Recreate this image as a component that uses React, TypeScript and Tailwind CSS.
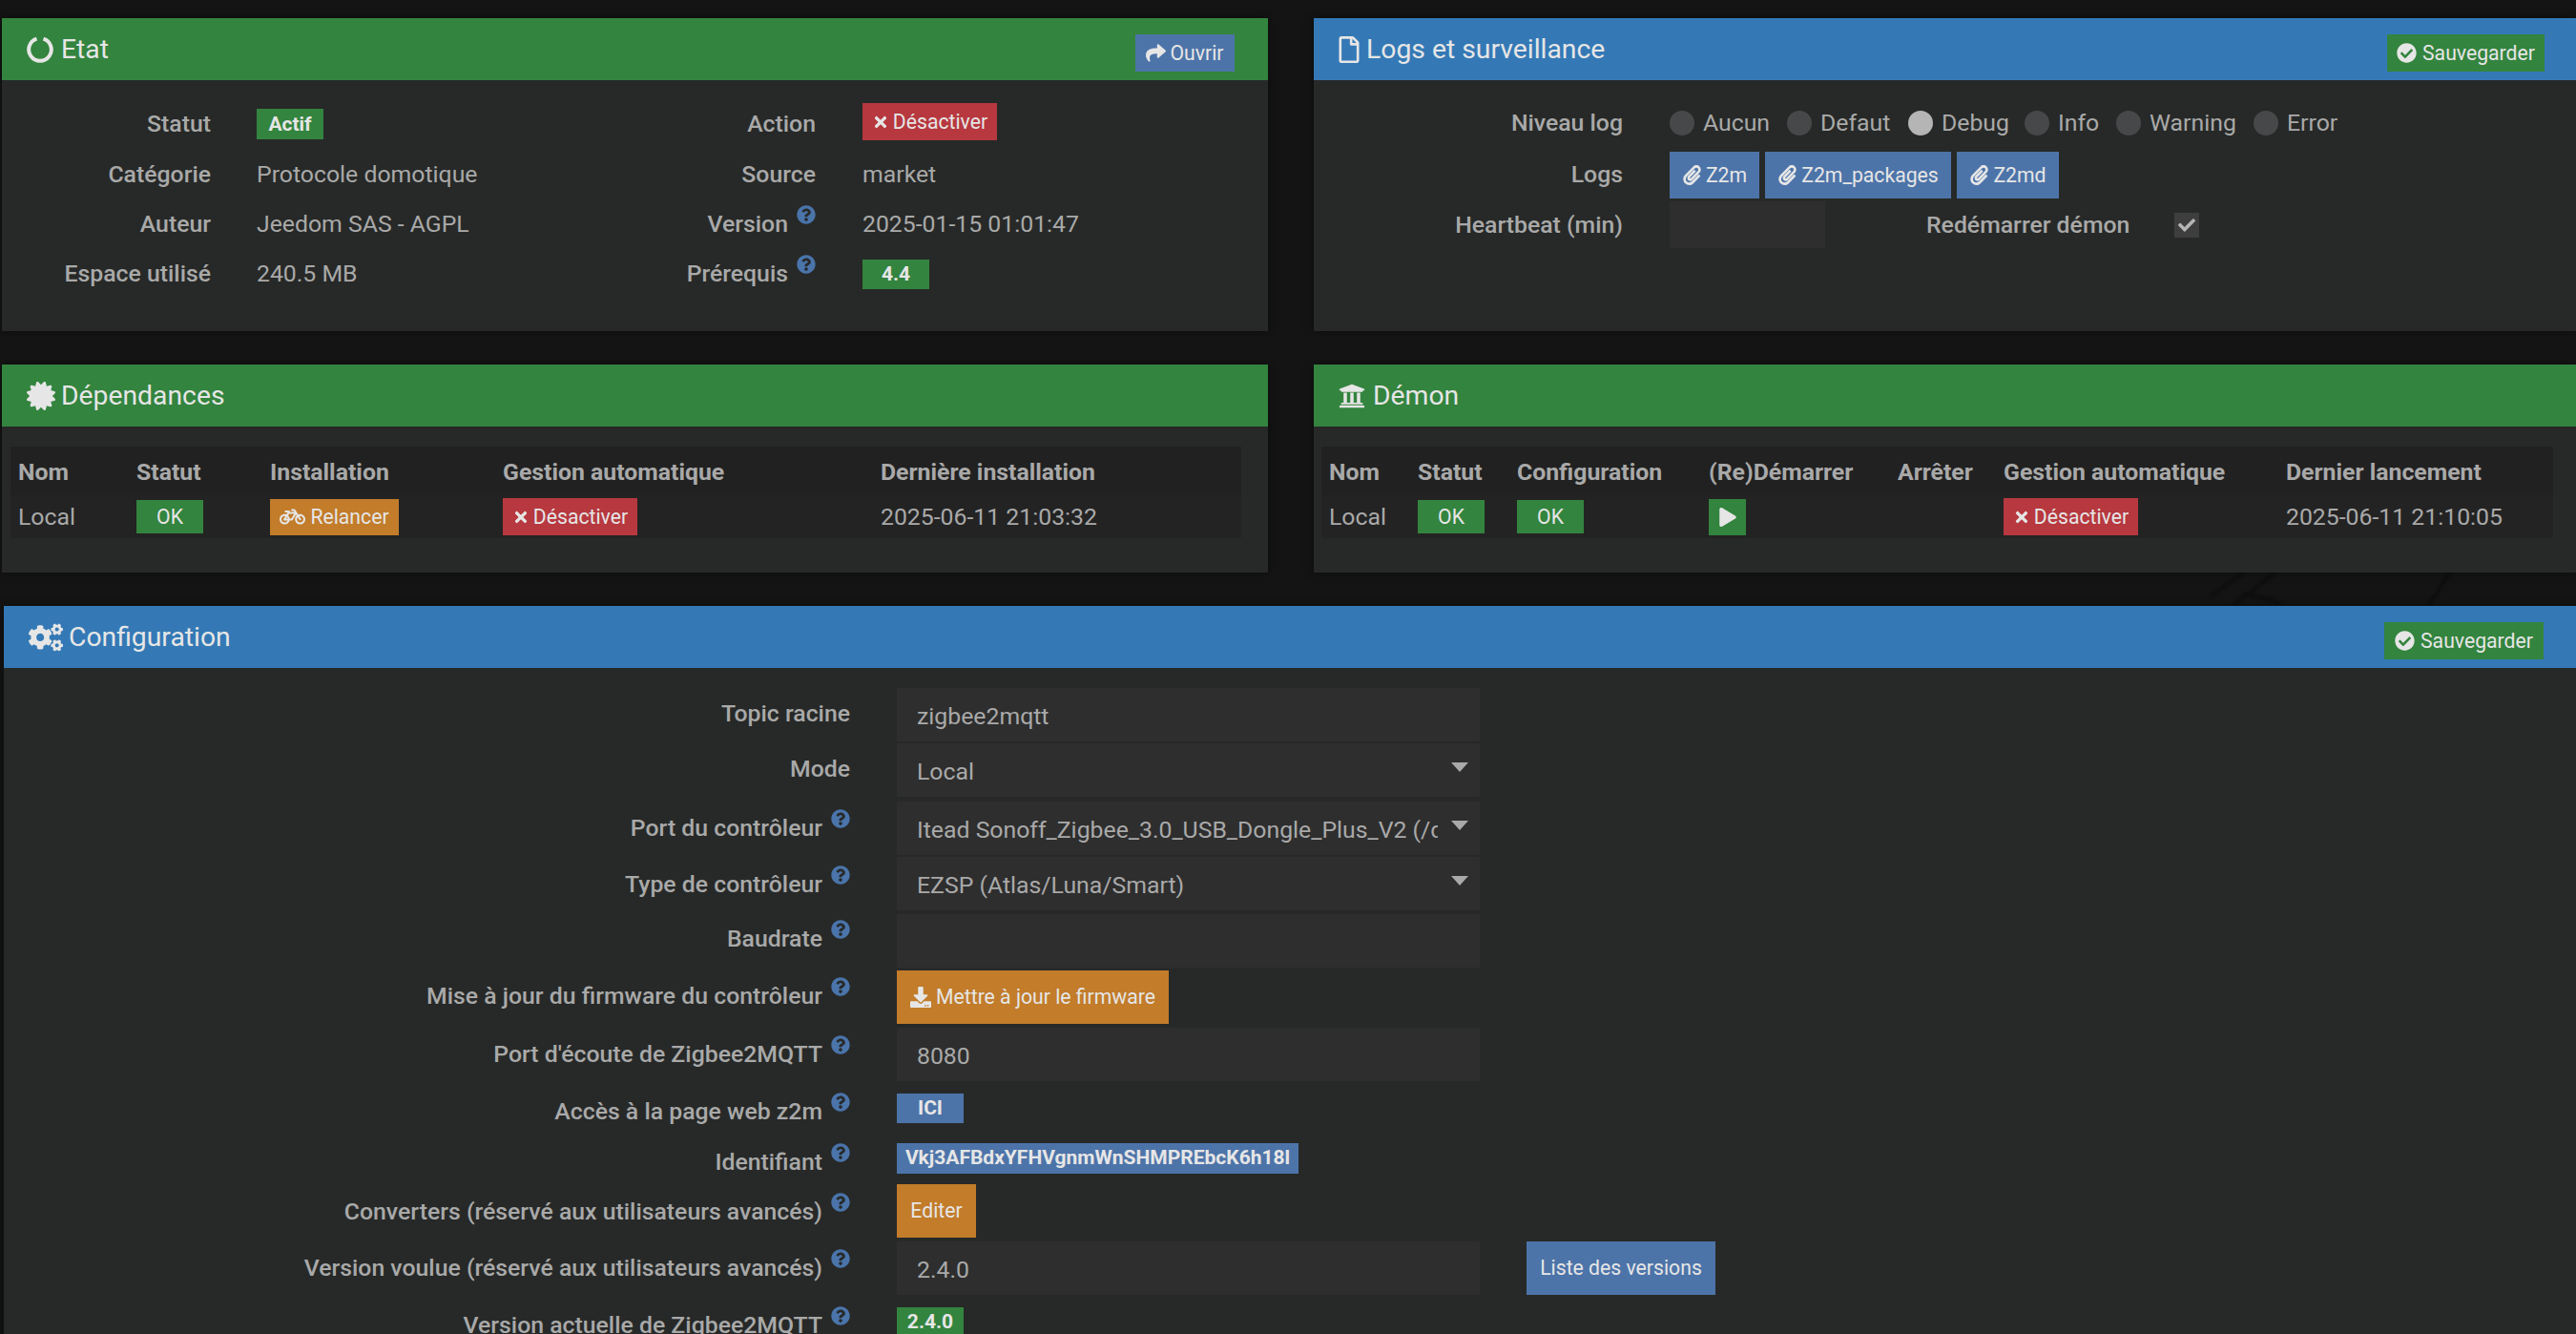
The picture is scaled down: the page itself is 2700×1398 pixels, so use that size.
import * as React from "react";
import {
  FaCertificate,
  FaCheck,
  FaCheckCircle,
  FaCogs,
  FaDownload,
  FaPaperclip,
  FaPlay,
  FaQuestionCircle,
  FaRegFile,
  FaShare,
  FaTimes,
  FaUniversity,
  FaBicycle,
} from "react-icons/fa";

// ============================================
// SMALL PIECES
// ============================================

function Help() {
  return (
    <span className="ml-[8px] mb-[20px] inline-flex w-[21px] shrink-0 justify-center text-[#4a74aa]">
      <FaQuestionCircle className="h-[20px] w-[20px]" />
    </span>
  );
}

function Notch() {
  return (
    <svg viewBox="0 0 28 28" className="mr-[8px] h-[28px] w-[28px]" fill="none" stroke="currentColor" strokeWidth="4">
      <path d="M10.5 2.7A11.8 11.8 0 1 0 17.5 2.7" />
    </svg>
  );
}

// faint streaks of the page's background picture, seen between the panels
function Streaks() {
  return (
    <svg viewBox="0 0 500 35" className="absolute left-[2200px] top-[600px] h-[35px] w-[500px] blur-[1.5px]" fill="none" stroke="#0e0e0e" strokeWidth="4">
      <path d="M118 24L152 0M140 35L185 0M150 21L190 32M345 35L368 0" />
    </svg>
  );
}

function Btn({ color, className, children }: { color: string; className: string; children: React.ReactNode }) {
  return (
    <span className={`inline-flex items-center whitespace-nowrap text-[21.2px] leading-none text-[#e6e6e6] ${color} ${className}`}>
      {children}
    </span>
  );
}

function Disable() {
  return (
    <Btn color="bg-[#b7383f]" className="h-[39px] w-[141px] justify-center gap-[4px]">
      <FaTimes className="h-[18px] w-[18px]" />
      Désactiver
    </Btn>
  );
}

function Save({ className }: { className: string }) {
  return (
    <Btn color="bg-[#33843e]" className={`h-[39px] justify-center gap-[6px] ${className}`}>
      <FaCheckCircle className="h-[21px] w-[21px]" />
      Sauvegarder
    </Btn>
  );
}

function Badge({ color, className, children }: { color: string; className: string; children: React.ReactNode }) {
  return (
    <span className={`inline-flex items-center justify-center whitespace-nowrap text-[21px] font-bold leading-none text-[#e6e6e6] ${color} ${className}`}>
      {children}
    </span>
  );
}

function Panel({
  title,
  icon,
  color,
  action,
  className,
  children,
}: {
  title: string;
  icon: React.ReactNode;
  color: string;
  action?: React.ReactNode;
  className: string;
  children: React.ReactNode;
}) {
  return (
    <section className={`relative bg-[#272928] shadow-[0_0_8px_rgba(0,0,0,0.5)] ${className}`}>
      <header className={`flex h-[65px] items-start justify-between ${color}`}>
        <h2 className="flex h-[65px] items-center pl-[26px] text-[28.3px] font-normal text-[#e6e6e6]">
          {icon}
          {title}
        </h2>
        {action}
      </header>
      {children}
    </section>
  );
}

// ============================================
// ETAT / LOGS
// ============================================

function EtatBody() {
  const label = "text-right font-medium text-[#a9a9a9]";
  return (
    <div className="grid auto-rows-[52.3px] grid-cols-[219px_367px_267px_1fr] items-center pt-[20px]">
      <div className={label}>Statut</div>
      <div className="pl-[48px]">
        <Badge color="bg-[#33843e]" className="h-[32px] w-[70px]">Actif</Badge>
      </div>
      <div className={label}>Action</div>
      <div className="pl-[49px]">
        <div className="mb-[5px] flex">
          <Disable />
        </div>
      </div>

      <div className={label}>Catégorie</div>
      <div className="pl-[48px]">Protocole domotique</div>
      <div className={label}>Source</div>
      <div className="pl-[49px]">market</div>

      <div className={label}>Auteur</div>
      <div className="pl-[48px]">Jeedom SAS - AGPL</div>
      <div className={`${label} flex items-center justify-end`}>
        Version
        <Help />
      </div>
      <div className="pl-[49px]">2025-01-15 01:01:47</div>

      <div className={label}>Espace utilisé</div>
      <div className="pl-[48px]">240.5 MB</div>
      <div className={`${label} flex items-center justify-end`}>
        Prérequis
        <Help />
      </div>
      <div className="pl-[49px]">
        <Badge color="bg-[#33843e]" className="h-[31px] w-[70px]">4.4</Badge>
      </div>
    </div>
  );
}

function Radio({ name, on, width }: { name: string; on?: boolean; width: string }) {
  return (
    <span className={`flex items-center gap-[9px] ${width}`}>
      <span className={`h-[26px] w-[26px] rounded-full ${on ? "bg-[#b5b5b5]" : "bg-[#474849]"}`} />
      {name}
    </span>
  );
}

function LogBtn({ name, className }: { name: string; className: string }) {
  return (
    <Btn color="bg-[#4d74a9]" className={`h-[49px] justify-center gap-[4px] ${className}`}>
      <FaPaperclip className="h-[21px] w-[21px]" />
      {name}
    </Btn>
  );
}

function LogsBody() {
  const label = "w-[324px] text-right font-medium text-[#a9a9a9]";
  return (
    <div className="pt-[20px]">
      <div className="flex h-[55px] items-center pb-[5px]">
        <div className={label}>Niveau log</div>
        <div className="ml-[49px] flex items-center">
          <Radio name="Aucun" width="w-[123px]" />
          <Radio name="Defaut" width="w-[127px]" />
          <Radio name="Debug" on width="w-[122px]" />
          <Radio name="Info" width="w-[96px]" />
          <Radio name="Warning" width="w-[144px]" />
          <Radio name="Error" width="w-[100px]" />
        </div>
      </div>
      <div className="flex h-[52px] items-start">
        <div className={`${label} pt-[9px]`}>Logs</div>
        <div className="ml-[49px] flex gap-[6px]">
          <LogBtn name="Z2m" className="w-[94px]" />
          <LogBtn name="Z2m_packages" className="w-[195px]" />
          <LogBtn name="Z2md" className="w-[107px]" />
        </div>
      </div>
      <div className="flex h-[49px] items-center">
        <div className={label}>Heartbeat (min)</div>
        <div className="ml-[49px] h-[49px] w-[163px] bg-[#2e2e2e]" />
        <div className="ml-[106px] w-[211px] whitespace-nowrap font-medium text-[#a9a9a9]">Redémarrer démon</div>
        <span className="ml-[49px] flex h-[26px] w-[26px] items-center justify-center bg-[#3e3e3e] text-[#b5b5b5]">
          <FaCheck className="h-[18px] w-[18px]" />
        </span>
      </div>
    </div>
  );
}

// ============================================
// TABLES
// ============================================

function Ok() {
  return (
    <Btn color="bg-[#33843e]" className="h-[35px] w-[70px] justify-center">
      OK
    </Btn>
  );
}

function StatusTable({
  widths,
  heads,
  cells,
  className,
}: {
  widths: number[];
  heads: string[];
  cells: React.ReactNode[];
  className: string;
}) {
  return (
    <table className={`table-fixed border-collapse bg-[#212121] ${className}`}>
      <colgroup>
        {widths.map((w, i) => (
          <col key={i} style={{ width: w }} />
        ))}
      </colgroup>
      <thead>
        <tr className="h-[51px]">
          {heads.map((h) => (
            <th key={h} className="whitespace-nowrap p-0 pl-[8px] pt-[2px] text-left font-bold text-[#a9a9a9]">
              {h}
            </th>
          ))}
        </tr>
      </thead>
      <tbody>
        <tr className="h-[45px] bg-[#232323]">
          {cells.map((c, i) => (
            <td key={i} className="p-0 pl-[8px] align-middle">
              <div className="flex items-center">{c}</div>
            </td>
          ))}
        </tr>
      </tbody>
    </table>
  );
}

// ============================================
// CONFIGURATION
// ============================================

function Field({ value, select, clip }: { value?: string; select?: boolean; clip?: boolean }) {
  return (
    <div className="relative flex h-[56px] w-[611px] items-center bg-[#2e2e2e] pl-[21px] pt-[3px]">
      <span className={clip ? "w-[546px] overflow-hidden whitespace-nowrap" : "whitespace-nowrap"}>{value}</span>
      {select && (
        <svg viewBox="0 0 18 10" className="absolute right-[12px] top-[20px] h-[10px] w-[18px] text-[#a9a9a9]" fill="currentColor">
          <polygon points="0,0 18,0 9,10" />
        </svg>
      )}
    </div>
  );
}

const CONFIG_ROWS: { label: string; help: boolean; height: string; pad: string; control: React.ReactNode }[] = [
  { label: "Topic racine", help: false, height: "h-[58px]", pad: "pt-[12px]", control: <Field value="zigbee2mqtt" /> },
  { label: "Mode", help: false, height: "h-[61px]", pad: "pt-[12px]", control: <Field value="Local" select /> },
  {
    label: "Port du contrôleur",
    help: true,
    height: "h-[58px]",
    pad: "pt-[8px]",
    control: <Field value="Itead Sonoff_Zigbee_3.0_USB_Dongle_Plus_V2 (/dev/ttyUSB0)" select clip />,
  },
  {
    label: "Type de contrôleur",
    help: true,
    height: "h-[60px]",
    pad: "pt-[9px]",
    control: <Field value="EZSP (Atlas/Luna/Smart)" select />,
  },
  { label: "Baudrate", help: true, height: "h-[59px]", pad: "pt-[6px]", control: <Field /> },
  {
    label: "Mise à jour du firmware du contrôleur",
    help: true,
    height: "h-[60px]",
    pad: "pt-[7px]",
    control: (
      <Btn color="bg-[#c27c2a]" className="h-[56px] w-[285px] justify-center gap-[5px]">
        <FaDownload className="h-[22px] w-[22px]" />
        Mettre à jour le firmware
      </Btn>
    ),
  },
  { label: "Port d'écoute de Zigbee2MQTT", help: true, height: "h-[68px]", pad: "pt-[8px]", control: <Field value="8080" /> },
  {
    label: "Accès à la page web z2m",
    help: true,
    height: "h-[52px]",
    pad: "pt-[0px]",
    control: <Badge color="bg-[#4d74a9]" className="h-[31px] w-[70px]">ICI</Badge>,
  },
  {
    label: "Identifiant",
    help: true,
    height: "h-[44px]",
    pad: "pt-[1px]",
    control: (
      <Badge color="bg-[#4d74a9]" className="h-[32px] w-[421px]">
        Vkj3AFBdxYFHVgnmWnSHMPREbcK6h18l
      </Badge>
    ),
  },
  {
    label: "Converters (réservé aux utilisateurs avancés)",
    help: true,
    height: "h-[60px]",
    pad: "pt-[9px]",
    control: (
      <Btn color="bg-[#c27c2a]" className="h-[56px] w-[83px] justify-center">
        Editer
      </Btn>
    ),
  },
  {
    label: "Version voulue (réservé aux utilisateurs avancés)",
    help: true,
    height: "h-[68px]",
    pad: "pt-[8px]",
    control: (
      <div className="flex">
        <Field value="2.4.0" />
        <Btn color="bg-[#4d74a9] ml-[49px]" className="h-[56px] w-[198px] justify-center">
          Liste des versions
        </Btn>
      </div>
    ),
  },
  {
    label: "Version actuelle de Zigbee2MQTT",
    help: true,
    height: "h-[40px]",
    pad: "pt-[0px]",
    control: <Badge color="bg-[#33843e]" className="h-[32px] w-[70px]">2.4.0</Badge>,
  },
];

function ConfigBody() {
  return (
    <div className="pt-[21px]">
      {CONFIG_ROWS.map((row) => (
        <div key={row.label} className={`flex items-start ${row.height}`}>
          <div className={`flex w-[887px] shrink-0 items-center justify-end font-medium text-[#a9a9a9] ${row.pad}`}>
            <span className="whitespace-nowrap">{row.label}</span>
            {row.help && <Help />}
          </div>
          <div className="ml-[49px]">{row.control}</div>
        </div>
      ))}
    </div>
  );
}

// ============================================
// PAGE
// ============================================

export default function App() {
  return (
    <div className="relative h-[1398px] w-[2700px] overflow-hidden bg-[#141414] pt-[19px] font-['Roboto',sans-serif] text-[24.8px] leading-[1.2] text-[#a9a9a9]">
      <Streaks />
      <div className="flex pl-[2px]">
        <div className="flex w-[1327px] flex-col gap-[35px]">
          <Panel
            title="Etat"
            icon={<Notch />}
            color="bg-[#33843e]"
            className="h-[328px]"
            action={
              <Btn color="bg-[#4d74a9] mr-[35px] mt-[17px]" className="h-[39px] w-[104px] justify-center gap-[4px]">
                <FaShare className="h-[21px] w-[21px]" />
                Ouvrir
              </Btn>
            }
          >
            <EtatBody />
          </Panel>
          <Panel
            title="Dépendances"
            icon={<FaCertificate className="mr-[6px] h-[30px] w-[30px]" />}
            color="bg-[#33843e]"
            className="h-[218px]"
          >
            <div className="pl-[9px] pt-[21px]">
              <StatusTable
                className="w-[1290px]"
                widths={[124, 140, 244, 396, 386]}
                heads={["Nom", "Statut", "Installation", "Gestion automatique", "Dernière installation"]}
                cells={[
                  "Local",
                  <Ok />,
                  <Btn color="bg-[#c27c2a]" className="h-[38px] w-[135px] justify-center gap-[5px]">
                    <FaBicycle className="h-[27px] w-[27px]" />
                    Relancer
                  </Btn>,
                  <Disable />,
                  "2025-06-11 21:03:32",
                ]}
              />
            </div>
          </Panel>
        </div>
        <div className="ml-[48px] flex flex-1 flex-col gap-[35px]">
          <Panel
            title="Logs et surveillance"
            icon={<FaRegFile className="mr-[7px] h-[28px] w-[22px]" />}
            color="bg-[#3479b6]"
            className="h-[328px]"
            action={<Save className="mr-[33px] mt-[17px] w-[165px]" />}
          >
            <LogsBody />
          </Panel>
          <Panel
            title="Démon"
            icon={<FaUniversity className="mr-[8px] h-[28px] w-[28px]" />}
            color="bg-[#33843e]"
            className="h-[218px]"
          >
            <div className="pl-[8px] pt-[21px]">
              <StatusTable
                className="w-[1291px]"
                widths={[93, 104, 201, 198, 111, 296, 288]}
                heads={["Nom", "Statut", "Configuration", "(Re)Démarrer", "Arrêter", "Gestion automatique", "Dernier lancement"]}
                cells={[
                  "Local",
                  <Ok />,
                  <Ok />,
                  <Btn color="bg-[#33843e]" className="h-[38px] w-[39px] justify-center">
                    <FaPlay className="h-[20px] w-[20px]" />
                  </Btn>,
                  "",
                  <Disable />,
                  "2025-06-11 21:10:05",
                ]}
              />
            </div>
          </Panel>
        </div>
      </div>
      <div className="mt-[35px] pl-[4px]">
        <Panel
          title="Configuration"
          icon={<FaCogs className="mr-[6px] h-[30px] w-[36px]" />}
          color="bg-[#3479b6]"
          className="h-[780px]"
          action={<Save className="mr-[34px] mt-[17px] w-[167px]" />}
        >
          <ConfigBody />
        </Panel>
      </div>
    </div>
  );
}
